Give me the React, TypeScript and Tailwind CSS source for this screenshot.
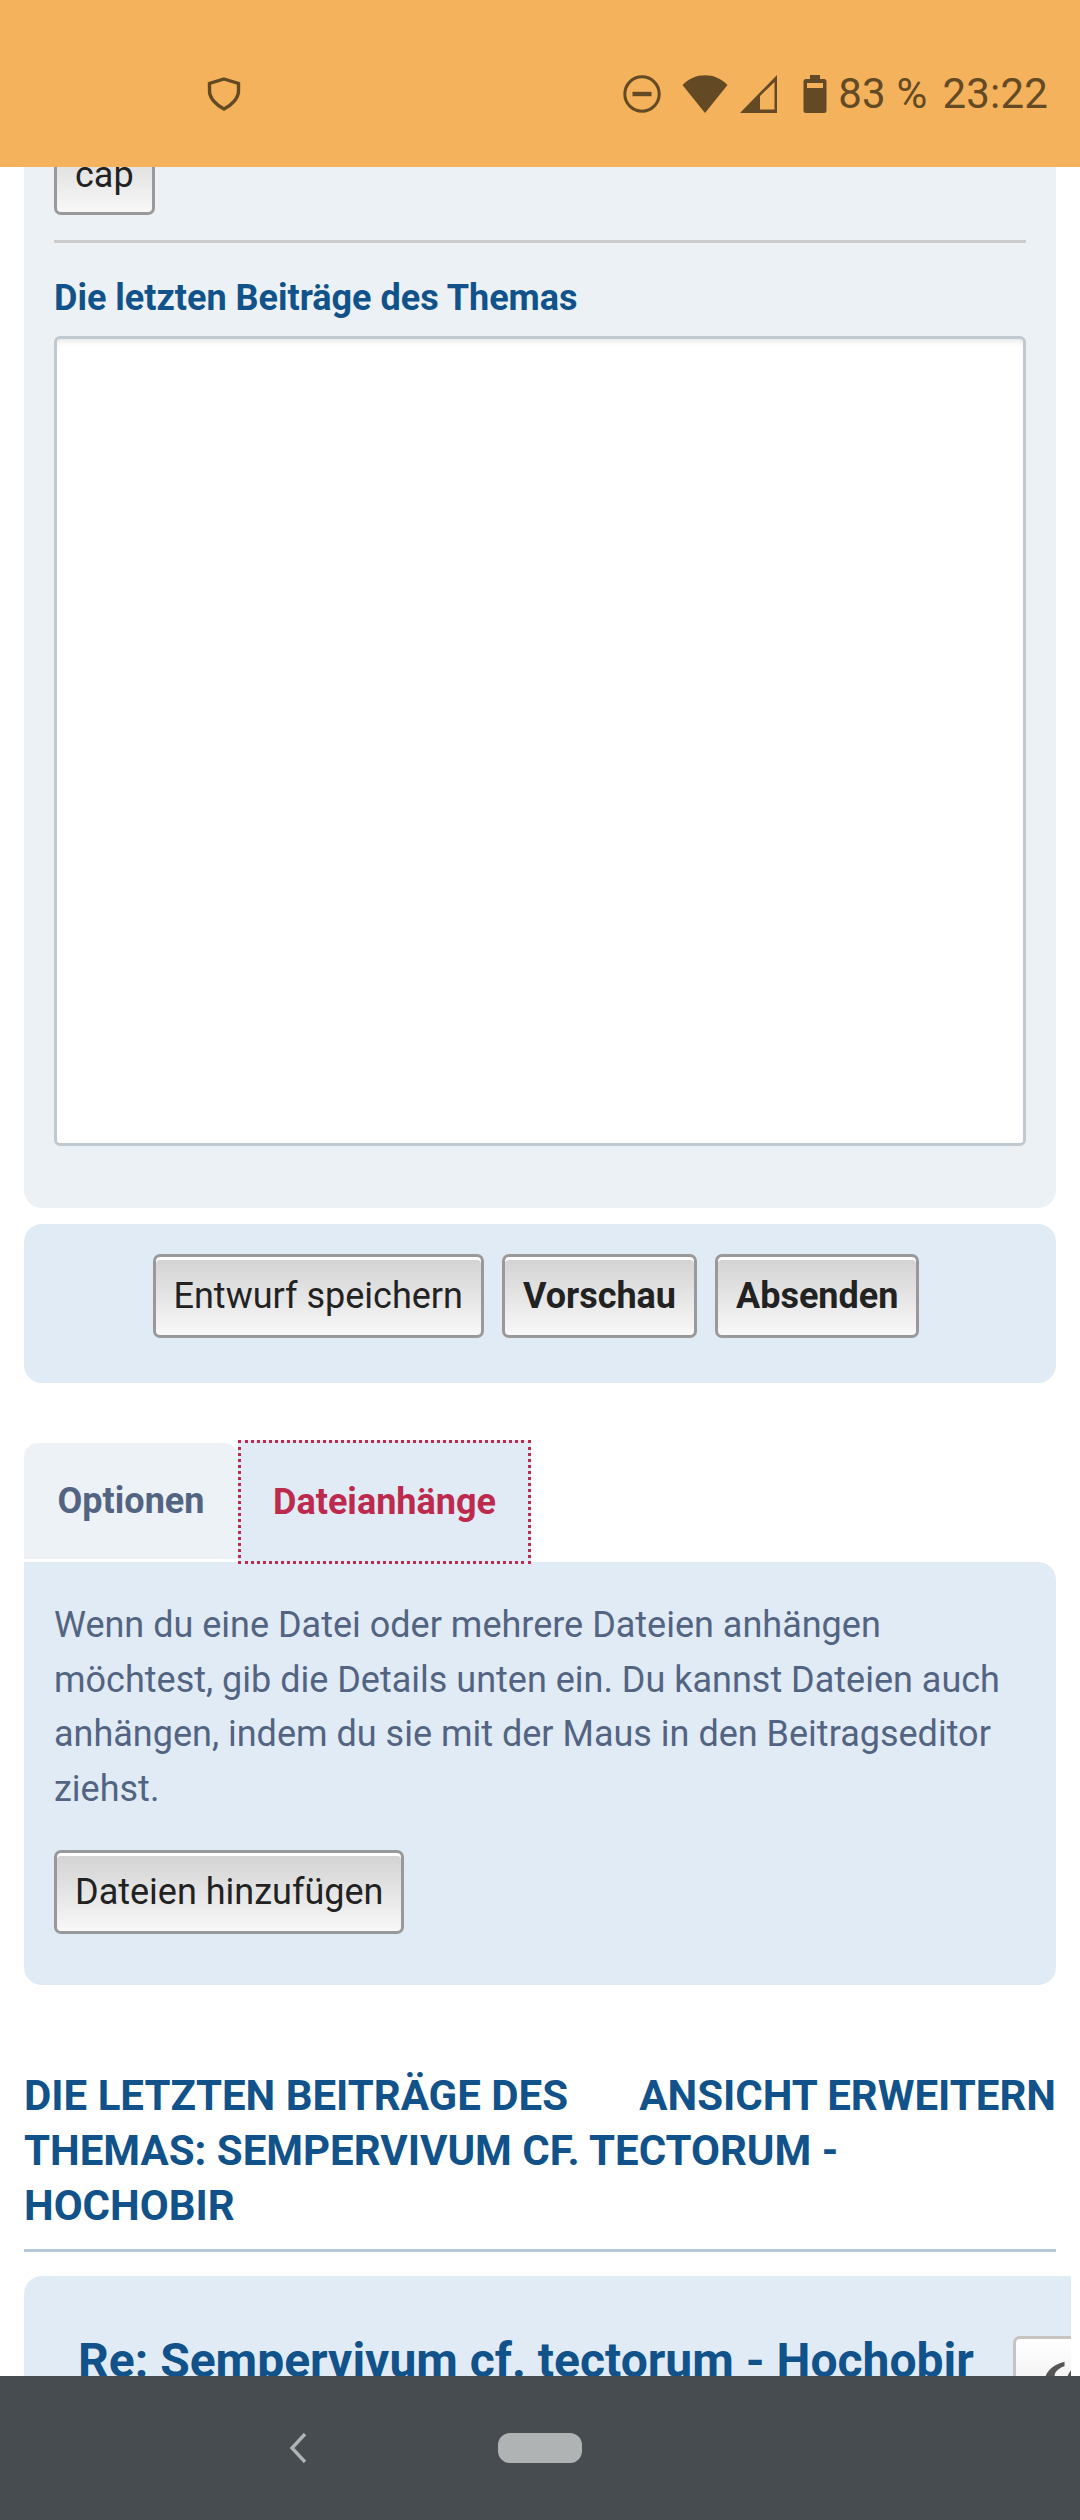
const gradButton =
  "h-[84px] rounded-[7px] border-[3px] border-[#999999] bg-gradient-to-b from-[#d2d2d2] to-[#f8f8f8] px-[18px] text-[36px] leading-none text-[#222222] shadow-[inset_0_3px_0_#ffffff]";

function StatusBar() {
  return (
    <div className="flex h-[167px] shrink-0 items-center bg-[#f3b25b] pl-[207px] pr-[32px] pt-[21px] text-[#634a25]">
      <svg width="34" height="34" viewBox="0 0 34 34" fill="none" stroke="currentColor" strokeWidth="3.4">
        <path d="M17 2 L31.5 6.5 V14 C31.5 21 25 28 17 32 C9 28 2.5 21 2.5 14 V6.5 Z" strokeLinejoin="miter" />
      </svg>
      <svg className="ml-auto" width="38" height="38" viewBox="0 0 38 38" fill="none" stroke="currentColor">
        <circle cx="19" cy="19" r="17.2" strokeWidth="3" />
        <path d="M9.5 19 H28.5" strokeWidth="4.4" />
      </svg>
      <svg className="ml-[21px]" width="46" height="38" viewBox="0 0 46 38" fill="currentColor">
        <path d="M0.5 10 C13 -3 33 -3 45.5 10 L23 38 Z" />
      </svg>
      <svg className="ml-[12px]" width="38" height="38" viewBox="0 0 38 38" fill="currentColor">
        <path fillRule="evenodd" d="M37 0 V38 H0 Z M34.5 7 L20 21 V34.5 H34.5 Z" />
      </svg>
      <svg className="ml-[25px]" width="24" height="38" viewBox="0 0 24 38" fill="currentColor">
        <path
          fillRule="evenodd"
          d="M7 0 H17 V4 H21 Q23.5 4 23.5 6.5 V35.5 Q23.5 38 21 38 H3 Q0.5 38 0.5 35.5 V6.5 Q0.5 4 3 4 H7 Z M4 8 V13 H20 V8 Z"
        />
      </svg>
      <span className="ml-[11px] text-[42px] leading-none tracking-[0.2px]">83 %</span>
      <span className="ml-[15px] text-[42px] leading-none tracking-[0.2px]">23:22</span>
    </div>
  );
}

function NavBar() {
  return (
    <div className="relative flex h-[144px] shrink-0 items-center justify-center bg-[#474c51]">
      <svg className="absolute left-[288px] top-[57px]" width="20" height="30" viewBox="0 0 20 30" fill="none" stroke="#b0b3b4" strokeWidth="3.4">
        <path d="M17 1 L4 15 L17 29" />
      </svg>
      <div className="h-[30px] w-[84px] rounded-[12px] bg-[#b0b3b4]" />
    </div>
  );
}

export default function App() {
  return (
    <div className="flex h-[2520px] w-[1080px] flex-col overflow-hidden bg-white font-['Roboto',sans-serif]">
      <StatusBar />
      <main className="min-h-0 flex-1 overflow-hidden">
        <div className="mx-[24px] rounded-b-[18px] bg-[#ecf1f5] px-[30px] pb-[62px]">
          <button className={`${gradButton} -mt-[36px] block pt-[4px]`}>cap</button>
          <div className="mt-[25px] h-[3px] bg-[#cccccc]" />
          <h4 className="mt-[28px] text-[36px] font-bold leading-[54px] text-[#105289]">Die letzten Beiträge des Themas</h4>
          <textarea
            readOnly
            className="mt-[11px] block h-[810px] w-full resize-none rounded-[6px] border-[3px] border-[#c0c8d0] bg-white shadow-[inset_0_6px_8px_-6px_#d5d9de]"
          />
        </div>

        <div className="mx-[24px] mt-[16px] flex h-[159px] items-start justify-center gap-[18px] rounded-[18px] bg-[#e1ebf5] pr-[8px] pt-[30px]">
          <button className={gradButton}>Entwurf speichern</button>
          <button className={`${gradButton} font-bold`}>Vorschau</button>
          <button className={`${gradButton} font-bold`}>Absenden</button>
        </div>

        <div className="relative z-10 ml-[24px] mt-[57px] flex h-[124px] items-end">
          <div className="mb-[5px] flex h-[116px] w-[214px] items-center justify-center rounded-t-[14px] bg-[#edf2f7] text-[36px] font-bold text-[#536482]">
            Optionen
          </div>
          <div className="flex h-[124px] w-[293px] items-center justify-center border-[3px] border-dotted border-[#bc2a4d] bg-[#e1ebf5] text-[36px] font-bold text-[#bc2a4d]">
            Dateianhänge
          </div>
        </div>

        <div className="mx-[24px] -mt-[2px] rounded-[18px] rounded-tl-none bg-[#e1ebf5] px-[30px] pb-[51px] pt-[36px]">
          <p className="text-[36px] leading-[54.6px] text-[#536482]">
            Wenn du eine Datei oder mehrere Dateien anhängen möchtest, gib die Details unten ein. Du kannst Dateien auch anhängen, indem du sie mit der Maus in den Beitragseditor ziehst.
          </p>
          <button className={`${gradButton} mt-[34px] block`}>Dateien hinzufügen</button>
        </div>

        <h3 className="mx-[24px] mt-[84px] border-b-[3px] border-[#b5c7d8] pb-[16px] text-[42px] font-bold uppercase leading-[54.6px] text-[#105289]">
          <span className="float-right">Ansicht erweitern</span>
          Die letzten Beiträge des Themas: Sempervivum cf. tectorum - Hochobir
        </h3>

        <div className="ml-[24px] mt-[24px] h-[200px] w-[1047px] overflow-hidden rounded-tl-[18px] bg-[#e1ebf5] pl-[54px] pt-[55px]">
          <div className="flex items-start">
            <h2 className="whitespace-nowrap text-[48px] font-bold leading-[60px] text-[#105289]">Re: Sempervivum cf. tectorum - Hochobir</h2>
            <button className="ml-[39px] mt-[5px] h-[84px] w-[90px] shrink-0 rounded-[7px] border-[3px] border-[#c7c3bf] bg-gradient-to-b from-white to-[#e9e9e9] pl-[24px] pt-[14px] text-left font-['Liberation_Serif',serif] text-[100px] font-bold leading-[84px] text-[#555555]">
              “
            </button>
          </div>
        </div>
      </main>
      <NavBar />
    </div>
  );
}
